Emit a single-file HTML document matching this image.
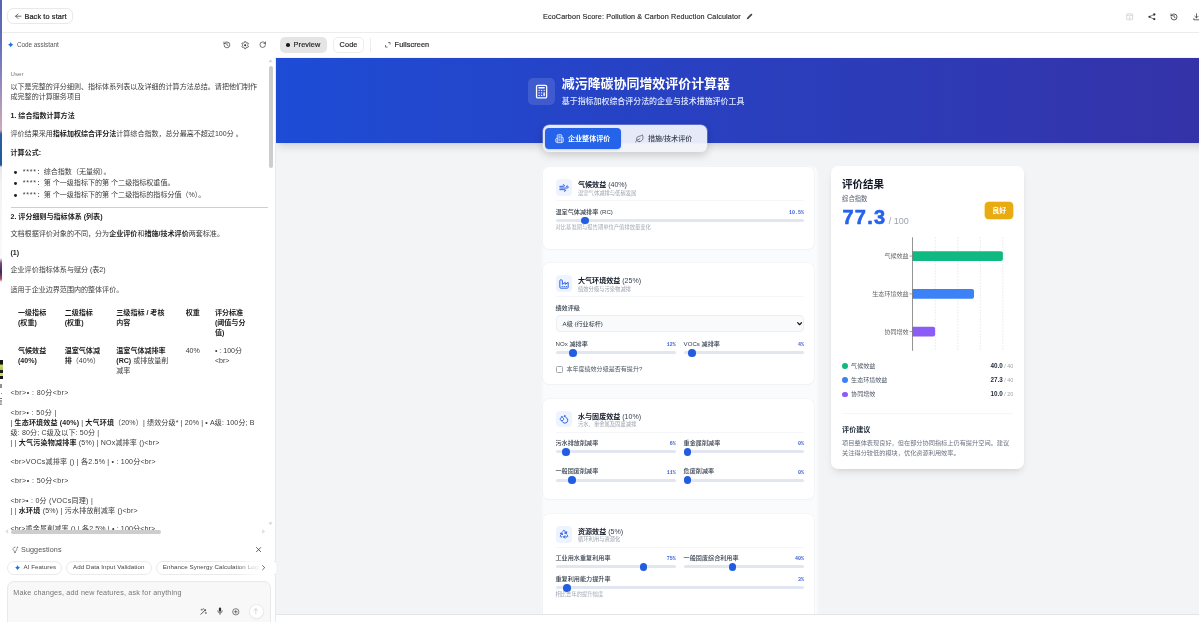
<!DOCTYPE html>
<html lang="zh">
<head>
<meta charset="utf-8">
<title>EcoCarbon Score: Pollution &amp; Carbon Reduction Calculator</title>
<style>
*{box-sizing:border-box;margin:0;padding:0}
html,body{width:1199px;height:622px;overflow:hidden;background:#fff}
body{position:relative;will-change:transform;font-family:"Liberation Sans","Noto Sans CJK SC",sans-serif;color:#1f2937;-webkit-font-smoothing:antialiased}
.abs{position:absolute}
.t{position:absolute;white-space:nowrap;line-height:1}
svg{display:block;overflow:visible}
/* ---------- top bar ---------- */
#topbar{left:0;top:0;width:1199px;height:33px;background:#fff;border-bottom:1px solid #ececec}
#back{left:6.6px;top:8px;width:66px;height:16.2px;border:1px solid #e9e9e9;border-radius:6px;background:#fff}
/* ---------- left panel ---------- */
#left{left:3px;top:33px;width:271px;height:589px;background:#fff;overflow:hidden}
#vdiv{left:275px;top:33px;width:1px;height:589px;background:#e9e9e9}
.chat{font-size:7.05px;color:#3a3a3a}
.chat b{color:#1c1c1c;font-weight:700}
.chip{top:560.6px;height:14px;border:1px solid #ebebeb;border-radius:7px;background:#fff}
.ctx{top:564.4px;font-size:6.2px;color:#444;letter-spacing:.07px}
/* ---------- preview ---------- */
#ptool{left:275px;top:33px;width:924px;height:24px;background:#fff}
#pv{left:276px;top:57px;width:923px;height:557px;background:#f3f4f6;overflow:hidden}
#hero{left:0;top:0;width:1016px;height:85px;background:linear-gradient(90deg,#1e4cd6 0%,#3730a3 100%);box-shadow:0 5px 8px -1.5px rgba(0,0,0,.12),0 2px 3px -2px rgba(0,0,0,.10)}
.card{position:absolute;background:#fff;border-radius:6px;box-shadow:0 0 0 .6px #f0f1f4,0 1px 1.5px rgba(0,0,0,.035)}
.ib{position:absolute;width:16.6px;height:16.4px;border-radius:4px;background:#eef4ff}
.ct{font-size:7.05px;font-weight:700;color:#111827}
.ct span{font-weight:400;color:#374151}
.cs{font-size:5.3px;color:#9ca3af}
.hr{position:absolute;height:1px;background:#f5f6f8}
.lb{color:#333c4a;font-weight:500}
.val{font-family:"Liberation Mono",monospace;font-weight:700;color:#3f5fd6}
.trk{position:absolute;height:3px;border-radius:2px;background:#e2e6f0}
.th{position:absolute;border-radius:50%;background:#225ce0}
.hint{font-size:5.3px;color:#a3a9b4}
</style>
</head>
<body>

<!-- TOP BAR -->
<div class="abs" id="topbar"></div>
<div class="abs" id="back"></div>
<svg class="abs" style="left:14.6px;top:12.9px" width="6.4" height="6.4" viewBox="0 0 14 14"><path d="M13 7H1.5M6.5 2 1.5 7l5 5" fill="none" stroke="#2a2a2a" stroke-width="1.5" stroke-linecap="round" stroke-linejoin="round"/></svg>
<div class="t" id="backt" style="left:24.4px;top:12.5px;font-size:7.3px;color:#262626;letter-spacing:.14px;-webkit-text-stroke:.22px #262626">Back to start</div>
<div class="t" id="ttl" style="left:543px;top:12.7px;font-size:7.2px;color:#2a2a2a;letter-spacing:.15px;-webkit-text-stroke:.15px #2a2a2a">EcoCarbon Score: Pollution &amp; Carbon Reduction Calculator</div>
<svg class="abs" style="left:745.5px;top:12.5px" width="7" height="7" viewBox="0 0 14 14"><path d="M1.5 12.5l.7-3L10 1.7a1.1 1.1 0 0 1 1.6 0l.7.7a1.1 1.1 0 0 1 0 1.6L4.5 11.8z" fill="#444"/></svg>
<!-- right icons -->
<svg class="abs" style="left:1125.5px;top:12.9px" width="7.4" height="7.6" viewBox="0 0 15 15"><rect x="1.5" y="1.5" width="12" height="12" rx="1" fill="none" stroke="#c4c4c4" stroke-width="1.3"/><path d="M1.5 4.5h12M7.5 6.5v5M5.6 9.6l1.9 1.9 1.9-1.9" fill="none" stroke="#c4c4c4" stroke-width="1.2"/></svg>
<svg class="abs" style="left:1148px;top:12.9px" width="8" height="7.6" viewBox="0 0 16 15"><path d="M2.2 7.5 12.2 3M2.2 7.5l10 4.6" fill="none" stroke="#333" stroke-width="1.3"/><circle cx="2.8" cy="7.5" r="2.1" fill="#333"/><circle cx="12.6" cy="2.9" r="2.3" fill="#333"/><circle cx="12.6" cy="12.1" r="2.3" fill="#333"/></svg>
<svg class="abs" style="left:1170.2px;top:12.8px" width="8" height="8" viewBox="0 0 24 24" fill="none" stroke="#333" stroke-width="2.300" stroke-linecap="round" stroke-linejoin="round"><path d="M3 12a9 9 0 1 0 9-9 9.750 9.750 0 0 0-6.740 2.740L3 8"/><path d="M3 3v5h5"/><path d="M12 7v5l3.500 2"/></svg>
<svg class="abs" style="left:1193px;top:12.9px" width="8" height="8" viewBox="0 0 16 16"><path d="M7 1.5v8M3.6 6.4 7 9.8l3.4-3.4M1.6 11v2.6h11" fill="none" stroke="#333" stroke-width="1.5" stroke-linecap="round" stroke-linejoin="round"/></svg>

<!-- LEFT PANEL -->
<div class="abs" id="left"></div>
<div class="abs" id="vdiv"></div>
<!-- panel header -->
<svg class="abs" style="left:8px;top:42.2px" width="5.4" height="5.6" viewBox="0 0 10 10"><path d="M5 0C5.7 2.5 7.5 4.3 10 5 7.5 5.7 5.7 7.5 5 10 4.3 7.5 2.5 5.7 0 5 2.5 4.3 4.3 2.5 5 0z" fill="#1a73e8"/></svg>
<div class="t" id="ca" style="left:16.9px;top:41.8px;font-size:6.35px;color:#555;letter-spacing:0">Code assistant</div>
<svg class="abs" style="left:222.7px;top:41.1px" width="7.8" height="7.8" viewBox="0 0 24 24" fill="none" stroke="#444" stroke-width="2.3" stroke-linecap="round" stroke-linejoin="round"><path d="M3 12a9 9 0 1 0 9-9 9.750 9.750 0 0 0-6.740 2.740L3 8"/><path d="M3 3v5h5"/><path d="M12 7v5l3.500 2"/></svg>
<svg class="abs" style="left:240.6px;top:40.9px" width="8.3" height="8.3" viewBox="0 0 24 24"><path d="M9.65 4.77L10.18 1.86L13.82 1.86L14.35 4.77L17.09 6.35L19.87 5.35L21.69 8.51L19.43 10.42L19.43 13.58L21.69 15.49L19.87 18.65L17.09 17.65L14.35 19.23L13.82 22.14L10.18 22.14L9.65 19.23L6.91 17.65L4.13 18.65L2.31 15.49L4.57 13.58L4.57 10.42L2.31 8.51L4.13 5.35L6.91 6.35Z" fill="none" stroke="#444" stroke-width="2.2" stroke-linejoin="round"/><circle cx="12" cy="12" r="2.900" fill="#222"/></svg>
<svg class="abs" style="left:259.400px;top:41.400px" width="7.400" height="7.400" viewBox="0 0 24 24" fill="none" stroke="#444" stroke-width="2.400" stroke-linecap="round" stroke-linejoin="round"><path d="M21 12a9 9 0 1 1-9-9c2.520 0 4.930 1 6.740 2.740L21 8"/><path d="M21 3v5h-5"/></svg>
<!-- chat -->
<div class="abs" id="chatclip" style="left:3px;top:58px;width:265px;height:471.6px;overflow:hidden"><div class="abs" style="left:-3px;top:-58px;width:280px;height:622px">
<div class="t chat" style="left:10.6px;top:70.6px;font-size:6.1px;color:#777">User</div>
<div class="t chat" style="left:10.5px;top:82.7px;">以下是完整的评分细则、指标体系列表以及详细的计算方法总结。请把他们制作</div>
<div class="t chat" style="left:10.5px;top:93.0px;">成完整的计算服务项目</div>
<div class="t chat" style="left:10.5px;top:112.3px;"><b>1. 综合指数计算方法</b></div>
<div class="t chat" style="left:10.5px;top:129.9px;">评价结果采用<b>指标加权综合评分法</b>计算综合指数，总分最高不超过100分 。</div>
<div class="t chat" style="left:10.5px;top:148.5px;"><b>计算公式:</b></div>
<div class="abs" style="left:14.6px;top:171.0px;width:2.8px;height:2.8px;border-radius:50%;background:#222;margin:-.2px 0 0 -.2px"></div>
<div class="t chat" style="left:22.7px;top:167.9px;"><span style="letter-spacing:.75px">****</span>：综合指数（无量纲）。</div>
<div class="abs" style="left:14.6px;top:182.5px;width:2.8px;height:2.8px;border-radius:50%;background:#222;margin:-.2px 0 0 -.2px"></div>
<div class="t chat" style="left:22.7px;top:179.4px;"><span style="letter-spacing:.75px">****</span>：第 个一级指标下的第 个二级指标权重值。</div>
<div class="abs" style="left:14.6px;top:194.1px;width:2.8px;height:2.8px;border-radius:50%;background:#222;margin:-.2px 0 0 -.2px"></div>
<div class="t chat" style="left:22.7px;top:191.0px;"><span style="letter-spacing:.75px">****</span>：第 个一级指标下的第 个二级指标的指标分值（%）。</div>
<div class="abs" style="left:10.5px;top:206.6px;width:257.5px;height:1px;background:#cfcfcf"></div>
<div class="t chat" style="left:10.5px;top:213.1px;"><b>2. 评分细则与指标体系 (列表)</b></div>
<div class="t chat" style="left:10.5px;top:230.4px;">文档根据评价对象的不同，分为<b>企业评价</b>和<b>措施/技术评价</b>两套标准。</div>
<div class="t chat" style="left:10.5px;top:249.3px;"><b>(1)</b></div>
<div class="t chat" style="left:10.5px;top:266.3px;">企业评价指标体系与赋分 (表2)</div>
<div class="t chat" style="left:10.5px;top:285.7px;">适用于企业边界范围内的整体评价。</div>
<div class="t chat" style="left:18px;top:309.3px;"><b>一级指标</b></div>
<div class="t chat" style="left:18px;top:319.2px;"><b>(权重)</b></div>
<div class="t chat" style="left:64.7px;top:309.3px;"><b>二级指标</b></div>
<div class="t chat" style="left:64.7px;top:319.2px;"><b>(权重)</b></div>
<div class="t chat" style="left:116.3px;top:309.3px;"><b>三级指标 / 考核</b></div>
<div class="t chat" style="left:116.3px;top:319.2px;"><b>内容</b></div>
<div class="t chat" style="left:185.7px;top:309.3px;"><b>权重</b></div>
<div class="t chat" style="left:214.9px;top:309.3px;"><b>评分标准</b></div>
<div class="t chat" style="left:214.9px;top:319.2px;"><b>(阈值与分</b></div>
<div class="t chat" style="left:214.9px;top:329.4px;"><b>值)</b></div>
<div class="t chat" style="left:18px;top:346.6px;"><b>气候效益</b></div>
<div class="t chat" style="left:18px;top:356.9px;"><b>(40%)</b></div>
<div class="t chat" style="left:64.7px;top:346.6px;"><b>温室气体减</b></div>
<div class="t chat" style="left:64.7px;top:356.9px;"><b>排</b>（40%）</div>
<div class="t chat" style="left:116.3px;top:346.6px;"><b>温室气体减排率</b></div>
<div class="t chat" style="left:116.3px;top:356.9px;"><b>(RC)</b> 或排放量削</div>
<div class="t chat" style="left:116.3px;top:366.8px;">减率</div>
<div class="t chat" style="left:185.7px;top:346.6px;">40%</div>
<div class="t chat" style="left:214.9px;top:346.6px;">• : 100分</div>
<div class="t chat" style="left:214.9px;top:356.9px;">&lt;br&gt;</div>
<div class="t chat" style="left:10.5px;top:389.1px;letter-spacing:0.412px">&lt;br&gt;• : 80分&lt;br&gt;</div>
<div class="t chat" style="left:10.5px;top:408.5px;letter-spacing:0.360px">&lt;br&gt;• : 50分 |</div>
<div class="t chat" style="left:10.5px;top:418.6px;letter-spacing:0.132px">| <b>生态环境效益 (40%)</b> | <b>大气环境</b>（20%）| 绩效分级* | 20% | • A级: 100分; B</div>
<div class="t chat" style="left:10.5px;top:428.8px;letter-spacing:0.158px">级: 80分; C级及以下: 50分 |</div>
<div class="t chat" style="left:10.5px;top:438.7px;letter-spacing:0.184px">| | <b>大气污染物减排率</b> (5%) | NOx减排率 ()&lt;br&gt;</div>
<div class="t chat" style="left:10.5px;top:458.0px;letter-spacing:0.215px">&lt;br&gt;VOCs减排率 () | 各2.5% | • : 100分&lt;br&gt;</div>
<div class="t chat" style="left:10.5px;top:477.3px;letter-spacing:0.412px">&lt;br&gt;• : 50分&lt;br&gt;</div>
<div class="t chat" style="left:10.5px;top:496.6px;letter-spacing:0.255px">&lt;br&gt;• : 0分 (VOCs同理) |</div>
<div class="t chat" style="left:10.5px;top:506.7px;letter-spacing:0.190px">| | <b>水环境</b> (5%) | 污水排放削减率 ()&lt;br&gt;</div>
<div class="t chat" style="left:10.5px;top:524.8px;letter-spacing:0.142px">&lt;br&gt;重金属削减率 () | 各2.5% | • : 100分&lt;br&gt;</div>
</div></div>
<!-- scrollbars -->
<svg class="abs" style="left:268.3px;top:59.3px" width="5" height="3.4" viewBox="0 0 10 7"><path d="M5 .5 9.500 6.500H.5z" fill="#d9d9d9"/></svg>
<div class="abs" style="left:268.9px;top:65.5px;width:4.2px;height:102.500px;border-radius:2px;background:#cdcdcd"></div>
<svg class="abs" style="left:268.3px;top:522.300px" width="5" height="3.4" viewBox="0 0 10 7"><path d="M5 6.500 9.500.5H.5z" fill="#d9d9d9"/></svg>
<div class="abs" style="left:11.2px;top:529.700px;width:150px;height:4.200px;border-radius:2.100px;background:#cdcdcd"></div>
<svg class="abs" style="left:4.800px;top:529.300px" width="3.400" height="5" viewBox="0 0 7 10"><path d="M.5 5 6.500.5v9z" fill="#dcdcdc"/></svg>
<svg class="abs" style="left:261.700px;top:529.300px" width="3.400" height="5" viewBox="0 0 7 10"><path d="M6.500 5 .5.5v9z" fill="#dcdcdc"/></svg>
<!-- suggestions -->
<svg class="abs" style="left:11.600px;top:546.300px" width="7" height="7.400" viewBox="0 0 14 15"><path d="M6 2.200a4 4 0 0 0-2.300 7.300c.5.400.8.900.8 1.500h3c0-.6.300-1.100.8-1.500A4 4 0 0 0 9.700 5.500" fill="none" stroke="#555" stroke-width="1.300" stroke-linecap="round"/><path d="M4.800 13.200h2.600" stroke="#555" stroke-width="1.300" stroke-linecap="round"/><path d="M11 .3c.2 1.300.9 2 2.200 2.200-1.300.2-2 .9-2.200 2.200-.2-1.300-.9-2-2.200-2.200 1.300-.2 2-.9 2.200-2.200z" fill="#555"/></svg>
<div class="t" id="sg" style="left:21px;top:546.300px;font-size:7.200px;color:#555;letter-spacing:.1px">Suggestions</div>
<svg class="abs" style="left:256.200px;top:547.400px" width="5.200" height="5.200" viewBox="0 0 10 10"><path d="M1 1l8 8M9 1 1 9" stroke="#333" stroke-width="1.500" stroke-linecap="round"/></svg>
<div class="abs chip" style="left:7px;width:55.400px"></div>
<div class="abs chip" style="left:66.300px;width:85.500px"></div>
<div class="abs chip" style="left:155.500px;width:125px"></div>
<svg class="abs" style="left:14.500px;top:564.900px" width="5.200" height="5.400" viewBox="0 0 10 10"><path d="M5 0C5.7 2.5 7.5 4.3 10 5 7.5 5.7 5.7 7.5 5 10 4.3 7.5 2.5 5.7 0 5 2.5 4.3 4.3 2.5 5 0z" fill="#1a73e8"/></svg>
<div class="t ctx" id="c1" style="left:23.400px">AI Features</div>
<div class="t ctx" id="c2" style="left:73.100px">Add Data Input Validation</div>
<div class="t ctx" id="c3" style="left:162.800px">Enhance Synergy Calculation Logic</div>
<div class="abs" style="left:236px;top:559px;width:38px;height:17px;background:linear-gradient(90deg,rgba(255,255,255,0) 0,rgba(255,255,255,.92) 58%,#fff 68%)"></div>
<svg class="abs" style="left:262.300px;top:564.900px" width="3.400" height="5.400" viewBox="0 0 7 11"><path d="M1.200 1.200 5.600 5.500 1.200 9.800" fill="none" stroke="#333" stroke-width="1.500" stroke-linecap="round" stroke-linejoin="round"/></svg>
<!-- input -->
<div class="abs" style="left:6.500px;top:580.900px;width:264.500px;height:50px;border:1px solid #e9e9e9;border-radius:7px;background:#f8f8f8"></div>
<div class="t" id="ph" style="left:13.300px;top:588.600px;font-size:7.2px;color:#767676;letter-spacing:.16px">Make changes, add new features, ask for anything</div>
<svg class="abs" style="left:200.300px;top:607.900px" width="7.200" height="7.200" viewBox="0 0 16 16"><path d="M2 14 11.500 4.500" stroke="#333" stroke-width="1.800" stroke-linecap="round"/><path d="M10.300 3.300l2.400 2.400" stroke="#333" stroke-width="2.600"/><path d="M4 2.200v3M2.500 3.700h3M13 9.500v3M11.500 11h3M8 .8v1.800" stroke="#333" stroke-width="1.100" stroke-linecap="round"/></svg>
<svg class="abs" style="left:216.500px;top:607.400px" width="6" height="8" viewBox="0 0 12 16"><rect x="3.800" y="1" width="4.400" height="8.500" rx="2.200" fill="#333"/><path d="M1.500 7.500a4.500 4.500 0 0 0 9 0M6 12v3" fill="none" stroke="#333" stroke-width="1.300" stroke-linecap="round"/></svg>
<svg class="abs" style="left:232.100px;top:607.700px" width="7.600" height="7.600" viewBox="0 0 16 16"><circle cx="8" cy="8" r="6.600" fill="none" stroke="#333" stroke-width="1.300"/><path d="M8 4.800v6.400M4.800 8h6.400" stroke="#333" stroke-width="1.300" stroke-linecap="round"/></svg>
<div class="abs" style="left:248.600px;top:603.900px;width:15.200px;height:15.200px;border-radius:50%;background:#fff;border:1px solid #ececec;box-shadow:0 .5px 1.500px rgba(0,0,0,.06)"></div>
<svg class="abs" style="left:253.400px;top:608.300px" width="5.600" height="6.400" viewBox="0 0 11 13"><path d="M5.500 12V1.500M1.500 5.500l4-4 4 4" fill="none" stroke="#c9c9c9" stroke-width="1.400" stroke-linecap="round" stroke-linejoin="round"/></svg>

<!-- PREVIEW TOOLBAR -->
<div class="abs" id="ptool"></div>
<div class="abs" style="left:280px;top:37px;width:46.600px;height:16px;border-radius:5px;background:#e5e5e5"></div>
<div class="abs" style="left:286.4px;top:43.3px;width:3.4px;height:3.4px;border-radius:50%;background:#1c1c1c"></div>
<div class="t" id="pvt" style="left:293.600px;top:41.400px;font-size:7.300px;color:#2a2a2a;letter-spacing:.12px;-webkit-text-stroke:.2px #2a2a2a">Preview</div>
<div class="abs" style="left:333px;top:37px;width:30.600px;height:16px;border-radius:5px;border:1px solid #ededed;background:#fff"></div>
<div class="t" id="cdt" style="left:339.600px;top:41.400px;font-size:7.300px;color:#2a2a2a;letter-spacing:.12px;-webkit-text-stroke:.2px #2a2a2a">Code</div>
<div class="abs" style="left:370px;top:38px;width:1px;height:14px;background:#ececec"></div>
<svg class="abs" style="left:384.800px;top:42.300px" width="5.600" height="5.600" viewBox="0 0 11 11"><path d="M6.800 1h3.200v3.200M4.200 10H1V6.800" fill="none" stroke="#444" stroke-width="1.400" stroke-linecap="round" stroke-linejoin="round"/></svg>
<div class="t" id="fst" style="left:394.600px;top:41.400px;font-size:7.300px;color:#2a2a2a;letter-spacing:.1px;-webkit-text-stroke:.2px #2a2a2a">Fullscreen</div>

<!-- PREVIEW -->
<div class="abs" id="pv">
<div class="abs" id="hero" style="top:.6px"></div>
<div class="abs" style="left:266.6px;top:110.3px;width:274.0px;height:452.7px;background:#fafbfc;border-radius:6px 6px 0 0;box-shadow:0 0 3px 1px rgba(250,251,252,.9)"></div>
<div class="abs" style="left:252px;top:21px;width:26.6px;height:26.6px;border-radius:5px;background:rgba(255,255,255,.12)"></div>
<svg class="abs" style="left:257.7px;top:26.7px" width="15.2" height="15.2" viewBox="0 0 24 24"><rect x="4" y="2" width="16" height="20" rx="2" fill="none" stroke="#fff" stroke-width="2"/><path d="M8 6h8" stroke="#fff" stroke-width="2.600" stroke-linecap="round"/><path d="M16 14v4M16 10h.01M12 10h.01M8 10h.01M12 14h.01M8 14h.01M12 18h.01M8 18h.01" fill="none" stroke="#fff" stroke-width="2.200" stroke-linecap="round"/></svg>
<div class="t " style="left:285.8px;top:20.92px;font-size:12.95px;font-weight:700;color:#fff">减污降碳协同增效评价计算器</div>
<div class="t " style="left:285.8px;top:41.42px;font-size:7.95px;color:#dde6ff;font-weight:500">基于指标加权综合评分法的企业与技术措施评价工具</div>
<div class="abs" style="left:266.5px;top:68px;width:164.0px;height:26.6px;border-radius:6px;background:linear-gradient(180deg,#e6e9f8 0,#e6e9f8 64%,#f3f4fa 72%,#f3f4fa 100%);box-shadow:0 3px 8px rgba(0,0,0,.18),0 0 0 .5px rgba(255,255,255,.5)"></div>
<div class="abs" style="left:269px;top:70.5px;width:76px;height:21.3px;border-radius:4px;background:#2563eb;box-shadow:0 1px 2px rgba(0,0,0,.15)"></div>
<svg class="abs" style="left:279.3px;top:76.8px" width="9" height="9" viewBox="0 0 24 24"><path d="M6 22V4a2 2 0 0 1 2-2h8a2 2 0 0 1 2 2v18ZM6 12H4a2 2 0 0 0-2 2v6a2 2 0 0 0 2 2h2M18 9h2a2 2 0 0 1 2 2v9a2 2 0 0 1-2 2h-2M10 6h4M10 10h4M10 14h4M10 18h4" fill="none" stroke="#fff" stroke-width="2" stroke-linecap="round" stroke-linejoin="round"/></svg>
<div class="t " style="left:292px;top:77.77px;font-size:7.05px;font-weight:700;color:#fff">企业整体评价</div>
<svg class="abs" style="left:359.4px;top:76.6px" width="9.2" height="9.2" viewBox="0 0 24 24"><path d="M11 20A7 7 0 0 1 9.800 6.100C15.500 5 17 4.480 19 2c1 2 2 4.180 2 8 0 5.500-4.780 10-10 10ZM2 21c0-3 1.850-5.360 5.080-6C9.500 14.520 12 13 13 12" fill="none" stroke="#4b5563" stroke-width="1.900" stroke-linecap="round" stroke-linejoin="round"/></svg>
<div class="t " style="left:372px;top:77.77px;font-size:7.05px;color:#374151;font-weight:500">措施/技术评价</div>
<div class="card" style="left:267.2px;top:110.3px;width:271.0px;height:81.6px;"></div>
<div class="ib" style="left:279.5px;top:122.3px;width:16.7px;height:16.5px;"></div>
<svg class="abs" style="left:282.85px;top:125.55px" width="10" height="10" viewBox="0 0 24 24"><path d="M12.8 19.6A2 2 0 1 0 14 16H2M17.5 8a2.500 2.500 0 1 1 2 4H2M9.800 4.400A2 2 0 1 1 11 8H2" fill="none" stroke="#2459e0" stroke-width="2.3" stroke-linecap="round" stroke-linejoin="round"/></svg>
<div class="t ct" style="left:302px;top:124.07px;font-size:7.05px;">气候效益 <span>(40%)</span></div>
<div class="t cs" style="left:302px;top:133.65px;font-size:5.3px;">温室气体减排与低碳发展</div>
<div class="hr" style="left:279.5px;top:143.1px;width:248.1px;height:1.0px;"></div>
<div class="t lb" style="left:279.5px;top:152.04px;font-size:6.12px;">温室气体减排率 (RC)</div>
<div class="t val" style="right:395.1px;top:154.10px;font-size:5.0px;">10.5%</div>
<div class="trk" style="left:279.5px;top:162.1px;width:248.1px;height:3.0px;"></div>
<div class="th" style="left:304.9px;top:159.75px;width:7.7px;height:7.7px;"></div>
<div class="t hint" style="left:279.5px;top:168.25px;font-size:5.3px;">对比基准期与报告期单位产值排放量变化</div>
<div class="card" style="left:267.2px;top:206.3px;width:271.0px;height:120.95px;"></div>
<div class="ib" style="left:279.5px;top:218.3px;width:16.7px;height:16.5px;"></div>
<svg class="abs" style="left:282.85px;top:221.55px" width="10" height="10" viewBox="0 0 24 24"><path d="M2 20a2 2 0 0 0 2 2h16a2 2 0 0 0 2-2V8l-7 5V8l-7 5V4a2 2 0 0 0-2-2H4a2 2 0 0 0-2 2ZM17 18h1M12 18h1M7 18h1" fill="none" stroke="#2459e0" stroke-width="2.3" stroke-linecap="round" stroke-linejoin="round"/></svg>
<div class="t ct" style="left:302px;top:220.07px;font-size:7.05px;">大气环境效益 <span>(25%)</span></div>
<div class="t cs" style="left:302px;top:229.65px;font-size:5.3px;">绩效分级与污染物减排</div>
<div class="hr" style="left:279.5px;top:239.1px;width:248.1px;height:1.0px;"></div>
<div class="t lb" style="left:279.5px;top:247.84px;font-size:6.12px;">绩效评级</div>
<div class="abs" style="left:279.5px;top:257.6px;width:248.1px;height:17.5px;border:1px solid #eceef1;border-radius:4px;background:#f9fafb"></div>
<div class="t " style="left:286.6px;top:263.65px;font-size:6.1px;color:#1f2937">A级 (行业标杆)</div>
<svg class="abs" style="left:520.6px;top:264.8px" width="5.2" height="3.6" viewBox="0 0 10 7"><path d="M1.2 1.300 5 5.300l3.800-4" fill="none" stroke="#111" stroke-width="2.3" stroke-linecap="round" stroke-linejoin="round"/></svg>
<div class="t lb" style="left:279.5px;top:284.24px;font-size:6.12px;">NOx 减排率</div>
<div class="t val" style="right:523.2px;top:286.30px;font-size:5.0px;">12%</div>
<div class="trk" style="left:279.5px;top:294.3px;width:120.0px;height:3.0px;"></div>
<div class="th" style="left:293.13px;top:291.95px;width:7.7px;height:7.7px;"></div>
<div class="t lb" style="left:407.6px;top:284.24px;font-size:6.12px;">VOCs 减排率</div>
<div class="t val" style="right:395.1px;top:286.30px;font-size:5.0px;">4%</div>
<div class="trk" style="left:407.6px;top:294.3px;width:120.0px;height:3.0px;"></div>
<div class="th" style="left:412.28px;top:291.95px;width:7.7px;height:7.7px;"></div>
<div class="abs" style="left:279.5px;top:308.6px;width:7.0px;height:7.0px;border:1px solid #a2a6ad;border-radius:1.5px;background:#fff"></div>
<div class="t " style="left:290.4px;top:309.08px;font-size:6.05px;color:#4b5563">本年度绩效分级是否有提升?</div>
<div class="card" style="left:267.2px;top:341.8px;width:271.0px;height:100.6px;"></div>
<div class="ib" style="left:279.5px;top:353.8px;width:16.7px;height:16.5px;"></div>
<svg class="abs" style="left:282.85px;top:357.05px" width="10" height="10" viewBox="0 0 24 24"><path d="M7 16.300c2.200 0 4-1.830 4-4.050 0-1.160-.570-2.260-1.710-3.190S7.290 6.750 7 5.300c-.290 1.450-1.140 2.840-2.290 3.760S3 11.100 3 12.250c0 2.220 1.800 4.050 4 4.050zM12.560 6.600A10.970 10.970 0 0 0 14 3.020c.5 2.500 2 4.900 4 6.500s3 3.500 3 5.500a6.980 6.980 0 0 1-11.910 4.970" fill="none" stroke="#2459e0" stroke-width="2.3" stroke-linecap="round" stroke-linejoin="round"/></svg>
<div class="t ct" style="left:302px;top:355.58px;font-size:7.05px;">水与固废效益 <span>(10%)</span></div>
<div class="t cs" style="left:302px;top:365.15px;font-size:5.3px;">污水、重金属及固废减排</div>
<div class="hr" style="left:279.5px;top:374.6px;width:248.1px;height:1.0px;"></div>
<div class="t lb" style="left:279.5px;top:383.24px;font-size:6.12px;">污水排放削减率</div>
<div class="t val" style="right:523.2px;top:385.30px;font-size:5.0px;">6%</div>
<div class="trk" style="left:279.5px;top:393.3px;width:120.0px;height:3.0px;"></div>
<div class="th" style="left:286.41px;top:390.95px;width:7.7px;height:7.7px;"></div>
<div class="t lb" style="left:407.6px;top:383.24px;font-size:6.12px;">重金属削减率</div>
<div class="t val" style="right:395.1px;top:385.30px;font-size:5.0px;">0%</div>
<div class="trk" style="left:407.6px;top:393.3px;width:120.0px;height:3.0px;"></div>
<div class="th" style="left:407.8px;top:390.95px;width:7.7px;height:7.7px;"></div>
<div class="t lb" style="left:279.5px;top:411.44px;font-size:6.12px;">一般固废削减率</div>
<div class="t val" style="right:523.2px;top:413.50px;font-size:5.0px;">11%</div>
<div class="trk" style="left:279.5px;top:421.5px;width:120.0px;height:3.0px;"></div>
<div class="th" style="left:292.01px;top:419.15px;width:7.7px;height:7.7px;"></div>
<div class="t lb" style="left:407.6px;top:411.44px;font-size:6.12px;">危废削减率</div>
<div class="t val" style="right:395.1px;top:413.50px;font-size:5.0px;">0%</div>
<div class="trk" style="left:407.6px;top:421.5px;width:120.0px;height:3.0px;"></div>
<div class="th" style="left:407.8px;top:419.15px;width:7.7px;height:7.7px;"></div>
<div class="card" style="left:267.2px;top:457px;width:271.0px;height:126px;"></div>
<div class="ib" style="left:279.5px;top:469px;width:16.7px;height:16.5px;"></div>
<svg class="abs" style="left:282.85px;top:472.25px" width="10" height="10" viewBox="0 0 24 24"><path d="M7 19H4.815a1.830 1.830 0 0 1-1.570-.881 1.785 1.785 0 0 1-.004-1.784L7.196 9.500M11 19h8.203a1.830 1.830 0 0 0 1.556-.890 1.784 1.784 0 0 0 0-1.775l-1.226-2.120M14 16l-3 3 3 3M8.293 13.596 7.196 9.500 3.100 10.598M9.344 5.811l1.093-1.892A1.830 1.830 0 0 1 11.985 3a1.784 1.784 0 0 1 1.546.888l3.943 6.843M13.378 9.633l4.096 1.098 1.097-4.096" fill="none" stroke="#2459e0" stroke-width="2.3" stroke-linecap="round" stroke-linejoin="round"/></svg>
<div class="t ct" style="left:302px;top:470.78px;font-size:7.05px;">资源效益 <span>(5%)</span></div>
<div class="t cs" style="left:302px;top:480.35px;font-size:5.3px;">循环利用与资源化</div>
<div class="hr" style="left:279.5px;top:489.8px;width:248.1px;height:1.0px;"></div>
<div class="t lb" style="left:279.5px;top:498.14px;font-size:6.12px;">工业用水重复利用率</div>
<div class="t val" style="right:523.2px;top:500.20px;font-size:5.0px;">75%</div>
<div class="trk" style="left:279.5px;top:508.2px;width:120.0px;height:3.0px;"></div>
<div class="th" style="left:363.62px;top:505.85px;width:7.7px;height:7.7px;"></div>
<div class="t lb" style="left:407.6px;top:498.14px;font-size:6.12px;">一般固废综合利用率</div>
<div class="t val" style="right:395.1px;top:500.20px;font-size:5.0px;">40%</div>
<div class="trk" style="left:407.6px;top:508.2px;width:120.0px;height:3.0px;"></div>
<div class="th" style="left:452.56px;top:505.85px;width:7.7px;height:7.7px;"></div>
<div class="t lb" style="left:279.5px;top:519.14px;font-size:6.12px;">重复利用能力提升率</div>
<div class="t val" style="right:395.1px;top:521.20px;font-size:5.0px;">3%</div>
<div class="trk" style="left:279.5px;top:529.2px;width:248.1px;height:3.0px;"></div>
<div class="th" style="left:286.9px;top:526.85px;width:7.7px;height:7.7px;"></div>
<div class="t hint" style="left:279.5px;top:535.35px;font-size:5.3px;">相比去年的提升幅度</div>
<div class="card" style="left:555.2px;top:109.2px;width:193.0px;height:302.8px;border-radius:7px;box-shadow:0 5px 9px -2px rgba(0,0,0,.10),0 2px 4px -2px rgba(0,0,0,.08);"></div>
<div class="t " style="left:566.1px;top:122.45px;font-size:10.5px;font-weight:700;color:#111827">评价结果</div>
<div class="t " style="left:566.1px;top:138.55px;font-size:6.3px;color:#6b7280;font-weight:500">综合指数</div>
<div class="t" id="score" style="left:566.4px;top:149.8px;font-size:20px;font-weight:700;color:#2563eb;letter-spacing:1.25px;-webkit-text-stroke:.6px #2563eb">77.3</div>
<div class="t" id="of100" style="left:612.7px;top:159.6px;font-size:9px;color:#9ca3af">/ 100</div>
<div class="abs" style="left:709.3px;top:144.8px;width:27.9px;height:17.2px;border-radius:4px;background:#e8ab12;box-shadow:0 0 0 .6px #f5d24a"></div>
<div class="t " style="left:716.2px;top:150.07px;font-size:7.05px;font-weight:700;color:#fff">良好</div>
<svg class="abs" style="left:0;top:0" width="923" height="557" font-family="Liberation Sans, Noto Sans CJK SC, sans-serif"><line x1="659.3" y1="180.3" x2="659.3" y2="293.8" stroke="#d9d9d9" stroke-width=".6" stroke-dasharray="1.5 1.5"/><line x1="681.8" y1="180.3" x2="681.8" y2="293.8" stroke="#d9d9d9" stroke-width=".6" stroke-dasharray="1.5 1.5"/><line x1="704.3" y1="180.3" x2="704.3" y2="293.8" stroke="#d9d9d9" stroke-width=".6" stroke-dasharray="1.5 1.5"/><line x1="726.8" y1="180.3" x2="726.8" y2="293.8" stroke="#d9d9d9" stroke-width=".6" stroke-dasharray="1.5 1.5"/><path d="M636.5,194.30h88.40a2,2 0 0 1 2,2v5.6a2,2 0 0 1 -2,2h-88.40z" fill="#10b981"/><line x1="633.5" y1="199.1" x2="636.5" y2="199.1" stroke="#666" stroke-width=".6"/><text x="632.6" y="201.25" text-anchor="end" font-size="6.05" fill="#666">气候效益</text><path d="M636.5,232.10h59.50a2,2 0 0 1 2,2v5.6a2,2 0 0 1 -2,2h-59.50z" fill="#3b82f6"/><line x1="633.5" y1="236.9" x2="636.5" y2="236.9" stroke="#666" stroke-width=".6"/><text x="632.6" y="239.05" text-anchor="end" font-size="6.05" fill="#666">生态环境效益</text><path d="M636.5,269.80h20.60a2,2 0 0 1 2,2v5.6a2,2 0 0 1 -2,2h-20.60z" fill="#8b5cf6"/><line x1="633.5" y1="274.6" x2="636.5" y2="274.6" stroke="#666" stroke-width=".6"/><text x="632.6" y="276.75" text-anchor="end" font-size="6.05" fill="#666">协同增效</text><line x1="636.5" y1="180.3" x2="636.5" y2="293.8" stroke="#666" stroke-width=".7"/></svg>
<div class="abs" style="left:565.9px;top:306.3px;width:5.8px;height:5.8px;border-radius:50%;background:#10b981"></div>
<div class="t " style="left:575.1px;top:306.18px;font-size:6.05px;color:#4b5563">气候效益</div>
<div class="t " style="right:185.8px;top:306.05px;font-size:6.3px;"><b style="color:#1f2937">40.0</b><span style="font-size:5.4px;color:#9ca3af">&nbsp;/ 40</span></div>
<div class="abs" style="left:565.9px;top:320.4px;width:5.8px;height:5.8px;border-radius:50%;background:#3b82f6"></div>
<div class="t " style="left:575.1px;top:320.28px;font-size:6.05px;color:#4b5563">生态环境效益</div>
<div class="t " style="right:185.8px;top:320.15px;font-size:6.3px;"><b style="color:#1f2937">27.3</b><span style="font-size:5.4px;color:#9ca3af">&nbsp;/ 40</span></div>
<div class="abs" style="left:565.9px;top:334.6px;width:5.8px;height:5.8px;border-radius:50%;background:#8b5cf6"></div>
<div class="t " style="left:575.1px;top:334.48px;font-size:6.05px;color:#4b5563">协同增效</div>
<div class="t " style="right:185.8px;top:334.35px;font-size:6.3px;"><b style="color:#1f2937">10.0</b><span style="font-size:5.4px;color:#9ca3af">&nbsp;/ 20</span></div>
<div class="hr" style="left:565.9px;top:355.6px;width:171.3px;height:1.0px;"></div>
<div class="t " style="left:566.1px;top:368.88px;font-size:7.05px;font-weight:700;color:#1f2937">评价建议</div>
<div class="t " style="left:566.1px;top:383.20px;font-size:6.2px;color:#6b7280">项目整体表现良好，但在部分协同指标上仍有提升空间。建议</div>
<div class="t " style="left:566.1px;top:393.30px;font-size:6.2px;color:#6b7280">关注得分较低的模块，优化资源利用效率。</div>
</div>
<div class="abs" style="left:276px;top:614px;width:923px;height:1px;background:#e3e5e8"></div>
<!-- desktop strip -->
<div class="abs" id="strip" style="left:0;top:0;width:2.4px;height:622px;background:linear-gradient(180deg,#5763b3 0px,#6570bb 45px,#8f86bd 80px,#c3a2b7 118px,#cfa9b4 130px,#2a5fa3 134px,#1f5a9c 165px,#e6e7ec 167px,#f2f2f4 185px,#fafafa 258px,#7a4a80 263px,#3a2a60 272px,#b04a6a 279px,#fff 282px,#fff 622px)"></div>
<div class="abs" style="left:0;top:360px;width:2.7px;height:18.6px;background:linear-gradient(180deg,#161616 0,#161616 22%,#c9d86a 26%,#b6c64e 50%,#1a1a1a 54%,#1a1a1a 66%,#cfd873 70%,#cfd873 82%,#161616 86%)"></div>
<div class="abs" style="left:.4px;top:384px;width:1.6px;height:4px;background:#777;opacity:.8"></div>
<div class="abs" style="left:.6px;top:392.5px;width:1px;height:1.6px;background:#888"></div>
<div class="abs" style="left:0;top:397.8px;width:2.4px;height:.8px;background:#777"></div>
<div class="abs" style="left:0;top:400px;width:2.4px;height:4.6px;background:linear-gradient(180deg,#777 0,#999 40%,#bbb 60%,#666 100%);opacity:.75"></div>
</body>
</html>
